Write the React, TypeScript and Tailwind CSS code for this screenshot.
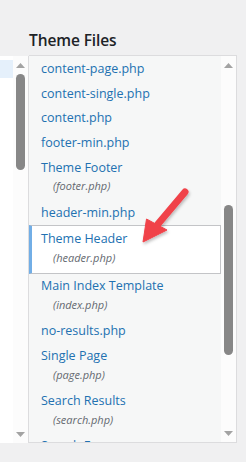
import React from "react";

type Item = { title: string; file?: string; active?: boolean };

const items: Item[] = [
  { title: "content-page.php" },
  { title: "content-single.php" },
  { title: "content.php" },
  { title: "footer-min.php" },
  { title: "Theme Footer", file: "(footer.php)" },
  { title: "header-min.php" },
  { title: "Theme Header", file: "(header.php)", active: true },
  { title: "Main Index Template", file: "(index.php)" },
  { title: "no-results.php" },
  { title: "Single Page", file: "(page.php)" },
  { title: "Search Results", file: "(search.php)" },
  { title: "Search Form", file: "(searchform.php)" },
];

function UpArrow() {
  return (
    <svg width="9" height="5" viewBox="0 0 9 5" className="block">
      <polygon points="4.5,0 9,5 0,5" fill="#a3a3a3" />
    </svg>
  );
}
function DownArrow() {
  return (
    <svg width="9" height="5" viewBox="0 0 9 5" className="block">
      <polygon points="0,0 9,0 4.5,5" fill="#a3a3a3" />
    </svg>
  );
}

export default function App() {
  const font = { fontFamily: '"Open Sans", "Noto Sans", sans-serif' };
  return (
    <div className="relative w-[246px] h-[462px] bg-[#f0f0f1] overflow-hidden" style={font}>
      <div className="h-[56px] flex items-end pl-[29px] pb-[6px]">
        <h2 className="text-[15.5px] font-semibold text-[#1d2327] leading-[20px] tracking-[-0.1px]">Theme Files</h2>
      </div>
      <div className="flex h-[387px]">
        {/* left pane */}
        <div className="flex w-[29px] border-r border-[#dcdcde]">
          <div className="w-[13px] bg-white pt-[4px]">
            <div className="h-[18px] bg-[#e5f0fb]" />
          </div>
          <div className="w-[15px] bg-[#fcfcfc] flex flex-col items-center pt-[7px] pb-[6px]">
            <UpArrow />
            <div className="mt-[6px] w-[9px] h-[96px] rounded-full bg-[#878787]" />
            <div className="flex-1" />
            <DownArrow />
          </div>
        </div>
        {/* right panel */}
        <div className="flex w-[208px] border-t border-r border-b border-[#dcdcde] -mt-px">
          <ul className="w-[192px] bg-[#f6f7f7] overflow-hidden pt-px">
            {items.map((it) =>
              it.active ? (
                <li
                  key={it.title}
                  className="bg-white border border-[#c3c4c7] border-l-[3px] border-l-[#72aee6] pl-[9px] pt-[4px] pb-[5.66px]"
                >
                  <div className="text-[12.5px] leading-[18.67px] text-[#2271b1]">{it.title}</div>
                  <div className="text-[11px] leading-[18.67px] italic text-[#646970] pl-[12px]">{it.file}</div>
                </li>
              ) : (
                <li key={it.title} className={`pl-[12px] pt-[3px] ${it.file ? "pb-[4.67px]" : "pb-[3px]"}`}>
                  <div className="text-[12.5px] leading-[18.67px] text-[#2271b1] whitespace-nowrap">{it.title}</div>
                  {it.file && (
                    <div className="text-[11px] leading-[18.67px] italic text-[#646970] pl-[12px]">{it.file}</div>
                  )}
                </li>
              )
            )}
          </ul>
          <div className="w-[15px] bg-[#fcfcfc] flex flex-col items-center pt-[7px] pb-[6px]">
            <UpArrow />
            <div className="h-[137px]" />
            <div className="w-[9px] h-[150px] rounded-full bg-[#878787]" />
            <div className="flex-1" />
            <DownArrow />
          </div>
        </div>
      </div>
      {/* red annotation arrow */}
      <svg className="absolute left-0 top-0 pointer-events-none" width="246" height="462" viewBox="0 0 246 462">
        <defs>
          <filter id="sh" x="-20%" y="-20%" width="140%" height="140%">
            <feDropShadow dx="1" dy="2" stdDeviation="1.5" floodColor="#000" floodOpacity="0.25" />
          </filter>
        </defs>
        <g filter="url(#sh)">
          <line x1="185" y1="192" x2="158" y2="224" stroke="#f0434a" strokeWidth="7" strokeLinecap="round" />
          <polygon points="143,242 146.5,219 167,230" fill="#f0434a" strokeLinejoin="round" stroke="#f0434a" strokeWidth="1" />
        </g>
      </svg>
    </div>
  );
}
